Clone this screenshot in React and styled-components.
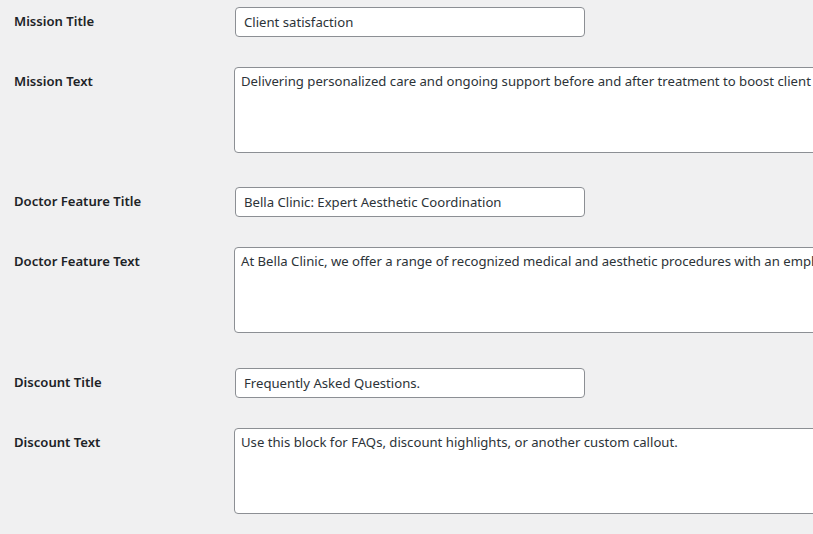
import styled, { createGlobalStyle } from "styled-components";

const fields = [
  {
    key: "mission_title",
    label: "Mission Title",
    type: "input",
    value: "Client satisfaction",
  },
  {
    key: "mission_text",
    label: "Mission Text",
    type: "textarea",
    value:
      "Delivering personalized care and ongoing support before and after treatment to boost client confidence and long-lasting results.",
  },
  {
    key: "doctor_feature_title",
    label: "Doctor Feature Title",
    type: "input",
    value: "Bella Clinic: Expert Aesthetic Coordination",
  },
  {
    key: "doctor_feature_text",
    label: "Doctor Feature Text",
    type: "textarea",
    value:
      "At Bella Clinic, we offer a range of recognized medical and aesthetic procedures with an emphasis on safety, comfort and natural results.",
  },
  {
    key: "discount_title",
    label: "Discount Title",
    type: "input",
    value: "Frequently Asked Questions.",
  },
  {
    key: "discount_text",
    label: "Discount Text",
    type: "textarea",
    value:
      "Use this block for FAQs, discount highlights, or another custom callout.",
  },
];

export default function App() {
  return (
    <>
      <GlobalStyle />
      <SCWrap>
        <SCFormTable>
          <tbody>
            {fields.map((f) => (
              <tr key={f.key}>
                <SCLabelCell scope="row">
                  <label htmlFor={f.key}>{f.label}</label>
                </SCLabelCell>
                <SCFieldCell>
                  {f.type === "input" ? (
                    <SCInput id={f.key} type="text" defaultValue={f.value} />
                  ) : (
                    <SCTextarea id={f.key} rows={5} defaultValue={f.value} />
                  )}
                </SCFieldCell>
              </tr>
            ))}
          </tbody>
        </SCFormTable>
      </SCWrap>
    </>
  );
}

const GlobalStyle = createGlobalStyle`
  html, body {
    margin: 0;
    background: #f0f0f1;
    overflow: hidden;
  }
  body {
    font-family: "Noto Sans", "Open Sans", sans-serif;
    font-size: 13px;
    color: #3c434a;
  }
`;

const SCWrap = styled.div`
  padding-left: 14px;
`;

const SCFormTable = styled.table`
  border-collapse: collapse;
  margin-top: -8.4px;
  width: 1100px;
  table-layout: fixed;
`;

const SCLabelCell = styled.th`
  width: 200px;
  padding: 21px 10px 19px 0;
  vertical-align: top;
  text-align: left;
  line-height: 1.3;
  font-weight: 600;
  font-size: 13.1px;
  color: #1d2327;
`;

const SCFieldCell = styled.td`
  padding: 15px 10px;
  vertical-align: middle;
  line-height: 1.3;
`;

const SCInput = styled.input`
  box-sizing: border-box;
  display: block;
  width: 350px;
  height: 30px;
  margin: 0 1px;
  padding: 0 8px;
  background: #fff;
  border: 1px solid #8c8f94;
  border-radius: 4px;
  font-family: "Noto Sans", "Open Sans", sans-serif;
  font-size: 13.15px;
  line-height: 2;
  color: #2c3338;
  outline: none;
`;

const SCTextarea = styled.textarea`
  box-sizing: border-box;
  display: block;
  width: 900px;
  height: 86px;
  margin: 0 0 4.5px;
  padding: 4px 6px 2px;
  background: #fff;
  border: 1px solid #8c8f94;
  border-radius: 4px;
  font-family: "Noto Sans", "Open Sans", sans-serif;
  font-size: 13.15px;
  line-height: 1.42;
  color: #2c3338;
  resize: none;
  outline: none;
`;
